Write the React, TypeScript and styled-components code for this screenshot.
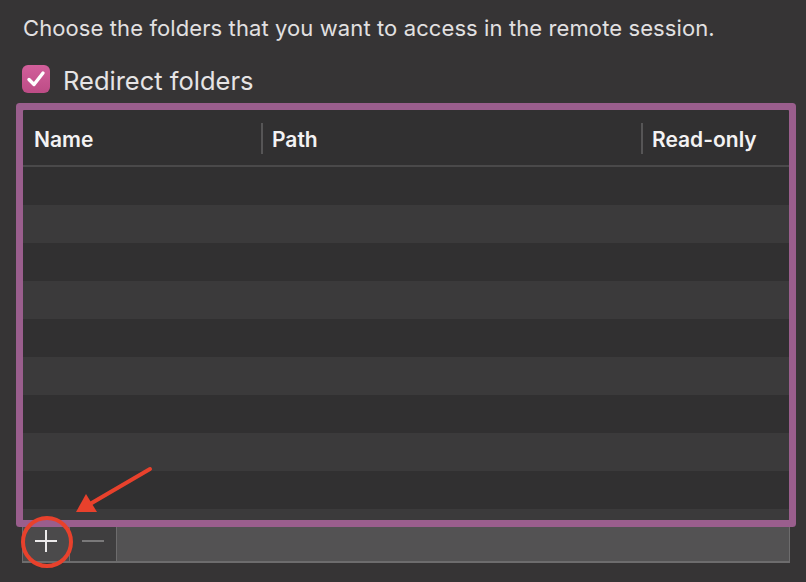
import React from "react";
import styled, { createGlobalStyle } from "styled-components";

const Global = createGlobalStyle`
  html, body { margin: 0; padding: 0; background: #363435; }
  body { width: 806px; height: 582px; overflow: hidden; font-family: Inter, "Noto Sans", "Liberation Sans", sans-serif; }
`;

const Page = styled.div`
  position: relative;
  width: 806px;
  height: 582px;
  box-sizing: border-box;
  padding: 14px 16px 0 22px;
  display: flex;
  flex-direction: column;
`;

const Intro = styled.div`
  font-size: 22px;
  letter-spacing: 0.1px;
  line-height: 26px;
  color: #e2e0e1;
  padding-left: 1px;
  margin-top: 1px;
`;

const CheckRow = styled.label`
  display: flex;
  align-items: center;
  gap: 13px;
  margin-top: 24px;
  height: 28px;
`;

const Box = styled.span`
  width: 28px;
  height: 28px;
  border-radius: 6px;
  background: linear-gradient(#d25f9b, #bd4c86);
  display: flex;
  align-items: center;
  justify-content: center;
`;

const CheckLabel = styled.span`
  font-size: 25.5px;
  color: #e6e4e5;
  line-height: 28px;
  padding-top: 3px;
`;

const Table = styled.div`
  position: relative;
  z-index: 1;
  margin-top: 17px;
  margin-left: 1px;
  width: 766px;
  height: 410px;
  background: #313031;
  box-shadow: 0 0 0 7px #9a5e8d;
  border-radius: 1px;
  display: flex;
  flex-direction: column;
  overflow: hidden;
`;

const Header = styled.div`
  display: grid;
  grid-template-columns: 238px 380px 1fr;
  height: 55px;
  border-bottom: 2px solid #4a494a;
  flex-shrink: 0;
`;

const HeadCell = styled.div<{ $sep?: boolean }>`
  display: flex;
  align-items: center;
  padding-left: ${(p) => (p.$sep ? "9px" : "11px")};
  padding-top: 3px;
  font-size: 21px;
  font-weight: 600;
  color: #f3f2f3;
  position: relative;
  border-left: ${(p) => (p.$sep ? "2px solid transparent" : "none")};
  &::before {
    content: "";
    display: ${(p) => (p.$sep ? "block" : "none")};
    position: absolute;
    left: -2px;
    top: 13px;
    bottom: 11px;
    width: 2px;
    background: #565556;
  }
`;

const Rows = styled.div`
  display: flex;
  flex-direction: column;
`;

const Row = styled.div<{ $alt: boolean }>`
  height: 38px;
  flex-shrink: 0;
  background: ${(p) => (p.$alt ? "#3b3a3b" : "#313031")};
`;

const Bar = styled.div`
  display: flex;
  width: 768px;
  height: 43px;
  box-sizing: border-box;
  border: 1px solid #6d6c6d;
  border-bottom-width: 2px;
`;

const BarButton = styled.div<{ $active?: boolean }>`
  width: 46px;
  display: flex;
  align-items: center;
  justify-content: center;
  background: ${(p) => (p.$active ? "#4b4a4b" : "#3f3e3f")};
  border-right: 1px solid #6d6c6d;
`;

const BarFill = styled.div`
  flex: 1;
  background: #535253;
`;

const Overlay = styled.svg`
  position: absolute;
  left: 0;
  top: 0;
  pointer-events: none;
  z-index: 5;
`;

export default function App() {
  const rows = Array.from({ length: 10 }, (_, i) => i);
  return (
    <>
      <Global />
      <Page>
        <Intro>Choose the folders that you want to access in the remote session.</Intro>
        <CheckRow>
          <Box>
            <svg width="20" height="18" viewBox="0 0 20 18">
              <path d="M3 9.5 L8 14.5 L17 3" fill="none" stroke="#fff" strokeWidth="3.4" strokeLinecap="round" strokeLinejoin="round" />
            </svg>
          </Box>
          <CheckLabel>Redirect folders</CheckLabel>
        </CheckRow>
        <Table>
          <Header>
            <HeadCell>Name</HeadCell>
            <HeadCell $sep>Path</HeadCell>
            <HeadCell $sep>Read-only</HeadCell>
          </Header>
          <Rows>
            {rows.map((i) => (
              <Row key={i} $alt={i % 2 === 1} />
            ))}
          </Rows>
        </Table>
        <Bar>
          <BarButton $active>
            <svg width="24" height="24" viewBox="0 0 24 24">
              <path d="M12 1 V23 M1 12 H23" stroke="#eceaeb" strokeWidth="2" />
            </svg>
          </BarButton>
          <BarButton>
            <svg width="24" height="4" viewBox="0 0 24 4">
              <path d="M1 2 H23" stroke="#7a797a" strokeWidth="2" />
            </svg>
          </BarButton>
          <BarFill />
        </Bar>
        <Overlay width="806" height="582" viewBox="0 0 806 582">
          <circle cx="47" cy="542" r="24" fill="none" stroke="#e8412c" strokeWidth="4" />
          <path d="M150 469 L90 504" stroke="#e8412c" strokeWidth="4" strokeLinecap="round" />
          <path d="M76 512 L86 494 L97 512 Z" fill="#e8412c" />
        </Overlay>
      </Page>
    </>
  );
}
